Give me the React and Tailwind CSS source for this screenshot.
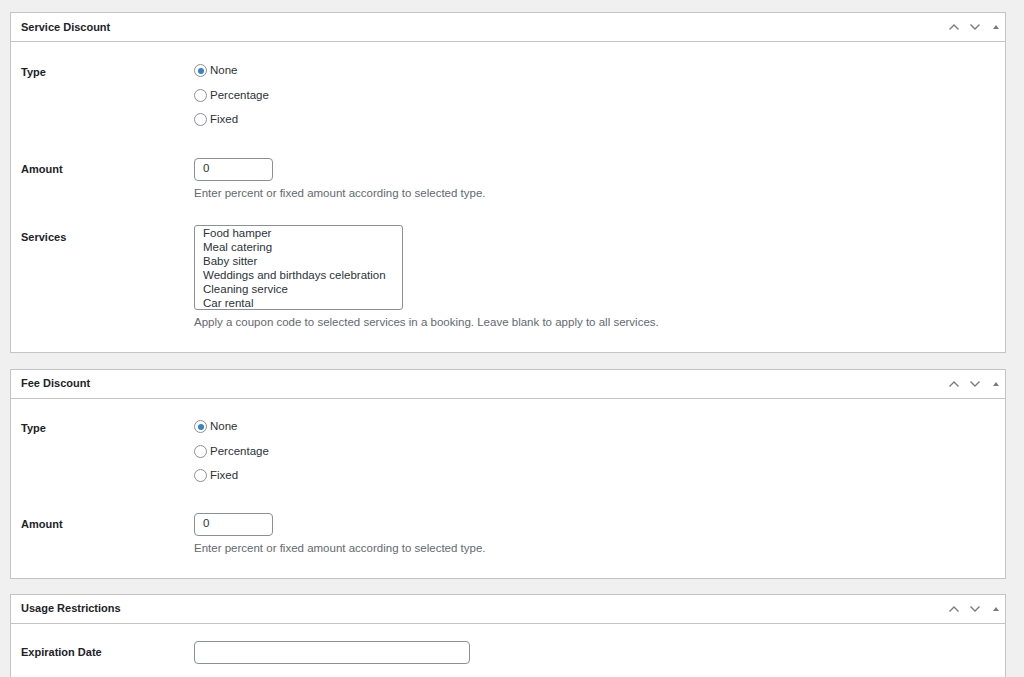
import React from 'react';

const font = { fontFamily: '"Liberation Sans", Arial, sans-serif' };

function HeaderIcons() {
  return (
    <div className="flex items-center gap-[9px] text-[#787c82]">
      <svg width="12" height="8" viewBox="0 0 12 8" fill="none">
        <path d="M1.5 6.5 L6 2 L10.5 6.5" stroke="currentColor" strokeWidth="1.4" />
      </svg>
      <svg width="12" height="8" viewBox="0 0 12 8" fill="none">
        <path d="M1.5 1.5 L6 6 L10.5 1.5" stroke="currentColor" strokeWidth="1.4" />
      </svg>
      <svg width="8" height="8" viewBox="0 0 8 8" className="ml-[2px]">
        <path d="M1 6 L4 2 L7 6 Z" fill="currentColor" />
      </svg>
    </div>
  );
}

function Panel({ title, children, className = '' }) {
  return (
    <div className={`ml-[10px] w-[996px] border border-[#c3c4c7] bg-white ${className}`}>
      <div className="flex h-[29px] items-center justify-between border-b border-[#c3c4c7] pl-[10px] pr-[5px]">
        <span className="text-[11px] font-bold text-[#1d2327]">{title}</span>
        <HeaderIcons />
      </div>
      {children}
    </div>
  );
}

function Radio({ label, checked }) {
  return (
    <div className="flex h-[24.5px] items-center">
      <span className="flex h-[13px] w-[13px] items-center justify-center rounded-full border border-[#8c8f94] bg-white">
        {checked && <span className="h-[6px] w-[6px] rounded-full bg-[#3582c4]" />}
      </span>
      <span className="ml-[3px] text-[11.5px] text-[#2c3338]">{label}</span>
    </div>
  );
}

function Row({ label, labelTop, children, className = '' }) {
  return (
    <div className={`flex ${className}`}>
      <div className="w-[173px] shrink-0 text-[11px] font-bold leading-[14px] text-[#1d2327]" style={{ paddingTop: labelTop }}>
        {label}
      </div>
      <div className="flex-1">{children}</div>
    </div>
  );
}

function TypeRow() {
  return (
    <Row label="Type" labelTop={6}>
      <Radio label="None" checked />
      <Radio label="Percentage" />
      <Radio label="Fixed" />
    </Row>
  );
}

function Desc({ children }) {
  return <p className="mt-[5px] text-[11.5px] leading-[14px] text-[#646970]">{children}</p>;
}

function AmountRow({ className }) {
  return (
    <Row label="Amount" labelTop={4.5} className={className}>
      <div className="flex h-[23px] w-[79px] items-center rounded-[4px] border border-[#8c8f94] pl-[8px] text-[11.5px] text-[#2c3338]">0</div>
      <Desc>Enter percent or fixed amount according to selected type.</Desc>
    </Row>
  );
}

const services = [
  'Food hamper',
  'Meal catering',
  'Baby sitter',
  'Weddings and birthdays celebration',
  'Cleaning service',
  'Car rental',
];

export default function App() {
  return (
    <div className="min-h-screen bg-[#f0f0f1] pt-[12px]" style={font}>
      <Panel title="Service Discount">
        <div className="pl-[10px] pt-[16.5px] pb-[23px]">
          <TypeRow />
          <AmountRow className="mt-[25.5px]" />
          <Row label="Services" labelTop={5} className="mt-[25px]">
            <div className="h-[85px] w-[209px] rounded-[3px] border border-[#8c8f94] pl-[8px] text-[11.5px] leading-[14px] text-[#2c3338]">
              {services.map((s) => (
                <div key={s}>{s}</div>
              ))}
            </div>
            <Desc>Apply a coupon code to selected services in a booking. Leave blank to apply to all services.</Desc>
          </Row>
        </div>
      </Panel>

      <Panel title="Fee Discount" className="mt-[16px]">
        <div className="pl-[10px] pt-[16px] pb-[23px]">
          <TypeRow />
          <AmountRow className="mt-[24.5px]" />
        </div>
      </Panel>

      <Panel title="Usage Restrictions" className="mt-[15px]">
        <div className="pl-[10px] pt-[17px] pb-[20px]">
          <Row label="Expiration Date" labelTop={4.5}>
            <div className="h-[23px] w-[276px] rounded-[4px] border border-[#8c8f94]" />
          </Row>
        </div>
      </Panel>
    </div>
  );
}
